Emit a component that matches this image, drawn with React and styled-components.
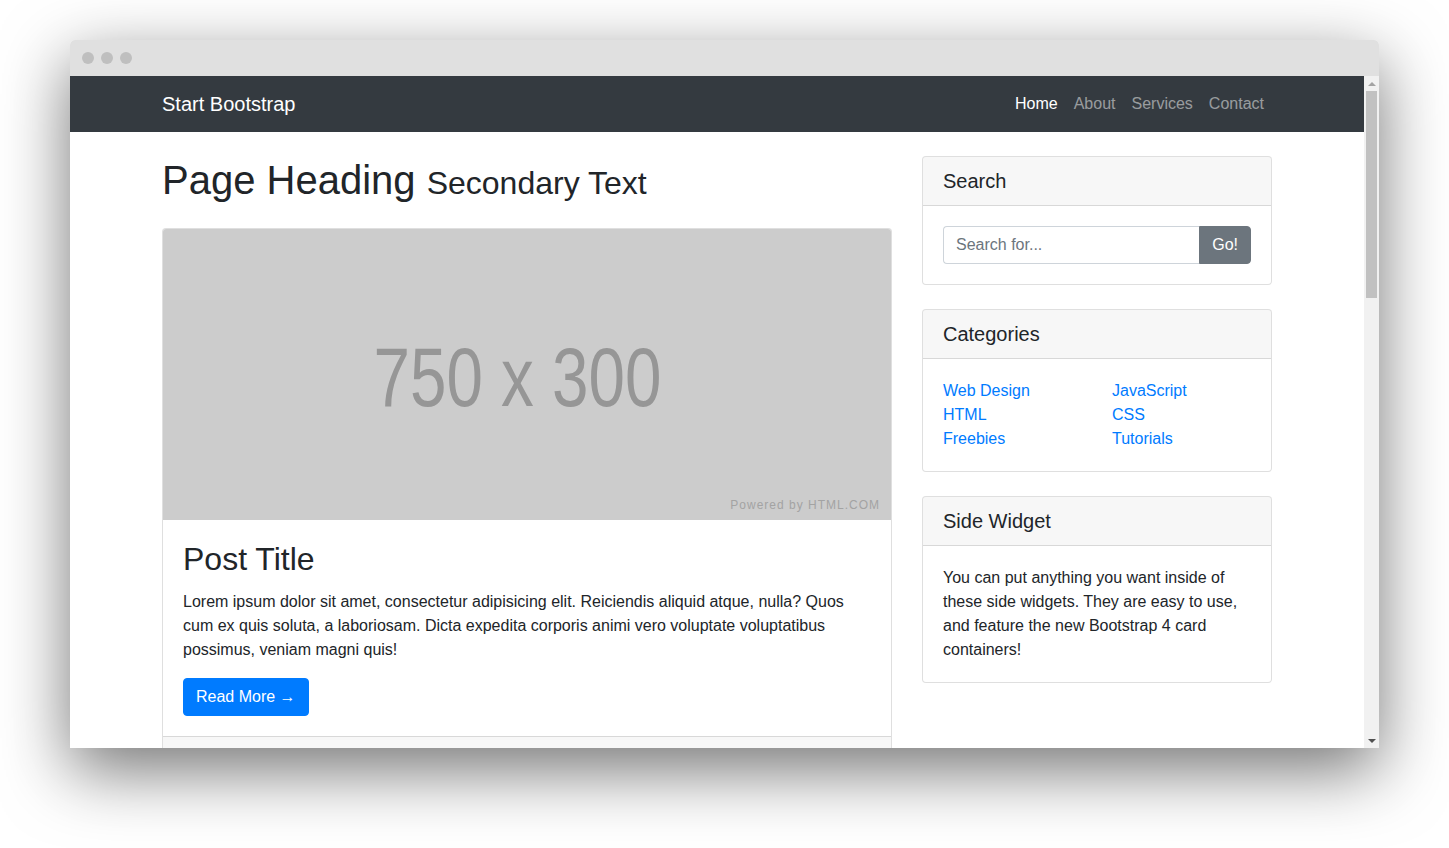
import React from "react";
import styled, {createGlobalStyle} from "styled-components";

const GlobalStyle = createGlobalStyle`
  body {
    margin: 0;
    background: #fff;
    font-family: "Liberation Sans", Arial, sans-serif;
    color: #212529;
  }
  * {
    box-sizing: border-box;
  }
`;

const Stage = styled.div`
  padding: 40px 70px 100px;
`;

const Window = styled.div`
  width: 1309px;
  border-radius: 5px 5px 0 0;
  overflow: hidden;
  box-shadow: 0 22px 68px rgba(0, 0, 0, 0.55);
`;

const TitleBar = styled.div`
  height: 36px;
  background: #e0e0e0;
  display: flex;
  align-items: center;
  gap: 7px;
  padding-left: 12px;
`;

const Dot = styled.span`
  width: 12px;
  height: 12px;
  border-radius: 50%;
  background: #bfbfbf;
`;

const WindowBody = styled.div`
  display: flex;
  height: 672px;
`;

const Page = styled.div`
  width: 1294px;
  overflow: hidden;
  background: #fff;
  font-size: 16px;
  line-height: 1.5;
`;

const Scrollbar = styled.div`
  width: 15px;
  background: #f1f1f1;
  display: flex;
  flex-direction: column;
  align-items: center;
`;

const ScrollArrow = styled.div`
  height: 15px;
  width: 15px;
  display: flex;
  align-items: center;
  justify-content: center;
  &::after {
    content: "";
    border-left: 4px solid transparent;
    border-right: 4px solid transparent;
    ${(p) => (p.$down
      ? "border-top: 4px solid #505050;"
      : "border-bottom: 4px solid #a3a3a3;")}
  }
`;

const ScrollTrack = styled.div`
  flex: 1;
  width: 100%;
  display: flex;
  justify-content: center;
`;

const ScrollThumb = styled.div`
  width: 11px;
  height: 207px;
  background: #c1c1c1;
`;

const Navbar = styled.nav`
  background: #343a40;
  height: 56px;
`;

const Container = styled.div`
  width: 1140px;
  margin: 0 auto;
  padding: 0 15px;
`;

const NavInner = styled(Container)`
  height: 100%;
  display: flex;
  align-items: center;
  justify-content: space-between;
`;

const Brand = styled.a`
  color: #fff;
  font-size: 20px;
  line-height: 30px;
  text-decoration: none;
`;

const NavList = styled.ul`
  display: flex;
  list-style: none;
  margin: 0;
  padding: 0;
`;

const NavLink = styled.a`
  display: block;
  padding: 8px;
  color: ${(p) => (p.$active ? "#fff" : "rgba(255, 255, 255, 0.5)")};
  text-decoration: none;
`;

const Row = styled.div`
  display: grid;
  grid-template-columns: 730px 350px;
  column-gap: 30px;
`;

const Heading = styled.h1`
  margin: 24px 0;
  font-size: 40px;
  font-weight: 500;
  line-height: 1.2;
`;

const Small = styled.small`
  font-size: 80%;
  font-weight: 400;
`;

const Card = styled.div`
  border: 1px solid rgba(0, 0, 0, 0.125);
  border-radius: 4px;
  background: #fff;
  overflow: hidden;
  margin-bottom: 24px;
  &:first-child {
    margin-top: 24px;
  }
`;

const Placeholder = styled.div`
  position: relative;
  height: 291px;
  background: #cccccc;
  display: flex;
  align-items: center;
  justify-content: center;
`;

const PlaceholderText = styled.span`
  font-size: 84px;
  line-height: 1;
  color: #969696;
  transform: scaleX(0.78);
  margin-left: -20px;
  margin-top: 4px;
`;

const PoweredBy = styled.span`
  position: absolute;
  right: 11px;
  bottom: 6px;
  font-size: 12px;
  letter-spacing: 1px;
  color: #a3a3a3;
`;

const CardBody = styled.div`
  padding: 20px;
`;

const PostTitle = styled.h2`
  margin: 0 0 12px;
  font-size: 32px;
  font-weight: 500;
  line-height: 1.2;
`;

const Text = styled.p`
  margin: 0 0 ${(p) => (p.$flush ? "0" : "16px")};
`;

const Button = styled.a`
  display: inline-block;
  padding: 6px 12px;
  font-size: 16px;
  line-height: 24px;
  color: #fff;
  background: ${(p) => (p.$variant === "secondary" ? "#6c757d" : "#007bff")};
  border: 1px solid ${(p) => (p.$variant === "secondary" ? "#6c757d" : "#007bff")};
  border-radius: 4px;
  text-decoration: none;
`;

const CardFooter = styled.div`
  height: 49px;
  background: rgba(0, 0, 0, 0.03);
  border-top: 1px solid rgba(0, 0, 0, 0.125);
`;

const Sidebar = styled.aside`
  display: flex;
  flex-direction: column;
`;

const CardHeader = styled.h5`
  margin: 0;
  padding: 12px 20px;
  font-size: 20px;
  font-weight: 500;
  line-height: 1.2;
  background: rgba(0, 0, 0, 0.03);
  border-bottom: 1px solid rgba(0, 0, 0, 0.125);
`;

const InputGroup = styled.div`
  display: flex;
  ${Button} {
    border-radius: 0 4px 4px 0;
  }
`;

const Input = styled.input`
  flex: 1;
  min-width: 0;
  height: 38px;
  padding: 6px 12px;
  font: inherit;
  font-size: 16px;
  color: #495057;
  border: 1px solid #ced4da;
  border-right: none;
  border-radius: 4px 0 0 4px;
  outline: none;
  &::placeholder {
    color: #6c757d;
  }
`;

const LinkColumns = styled.div`
  display: grid;
  grid-template-columns: 169px 139px;
`;

const LinkList = styled.ul`
  list-style: none;
  margin: 0;
  padding: 0;
`;

const Link = styled.a`
  color: #007bff;
  text-decoration: none;
`;

const navLinks = ["Home", "About", "Services", "Contact"];
const categories = [
  ["Web Design", "HTML", "Freebies"],
  ["JavaScript", "CSS", "Tutorials"],
];

export default function App() {
  return (
    <>
      <GlobalStyle/>
      <Stage>
        <Window>
          <TitleBar>
            <Dot/>
            <Dot/>
            <Dot/>
          </TitleBar>
          <WindowBody>
            <Page>
              <Navbar>
                <NavInner>
                  <Brand href="#">Start Bootstrap</Brand>
                  <NavList>
                    {navLinks.map((link, i) => (
                      <li key={link}>
                        <NavLink href="#" $active={i === 0}>{link}</NavLink>
                      </li>
                    ))}
                  </NavList>
                </NavInner>
              </Navbar>

              <Container>
                <Row>
                  <main>
                    <Heading>
                      Page Heading <Small>Secondary Text</Small>
                    </Heading>
                    <Card>
                      <Placeholder>
                        <PlaceholderText>750 x 300</PlaceholderText>
                        <PoweredBy>Powered by HTML.COM</PoweredBy>
                      </Placeholder>
                      <CardBody>
                        <PostTitle>Post Title</PostTitle>
                        <Text>
                          Lorem ipsum dolor sit amet, consectetur adipisicing elit. Reiciendis aliquid atque, nulla? Quos
                          cum ex quis soluta, a laboriosam. Dicta expedita corporis animi vero voluptate voluptatibus
                          possimus, veniam magni quis!
                        </Text>
                        <Button href="#">Read More &rarr;</Button>
                      </CardBody>
                      <CardFooter/>
                    </Card>
                  </main>

                  <Sidebar>
                    <Card>
                      <CardHeader>Search</CardHeader>
                      <CardBody>
                        <InputGroup>
                          <Input placeholder="Search for..."/>
                          <Button as="button" $variant="secondary">Go!</Button>
                        </InputGroup>
                      </CardBody>
                    </Card>

                    <Card>
                      <CardHeader>Categories</CardHeader>
                      <CardBody>
                        <LinkColumns>
                          {categories.map((col, i) => (
                            <LinkList key={i}>
                              {col.map((c) => (
                                <li key={c}><Link href="#">{c}</Link></li>
                              ))}
                            </LinkList>
                          ))}
                        </LinkColumns>
                      </CardBody>
                    </Card>

                    <Card>
                      <CardHeader>Side Widget</CardHeader>
                      <CardBody>
                        <Text $flush>
                          You can put anything you want inside of these side widgets. They are easy to use, and
                          feature the new Bootstrap 4 card containers!
                        </Text>
                      </CardBody>
                    </Card>
                  </Sidebar>
                </Row>
              </Container>
            </Page>
            <Scrollbar>
              <ScrollArrow/>
              <ScrollTrack>
                <ScrollThumb/>
              </ScrollTrack>
              <ScrollArrow $down/>
            </Scrollbar>
          </WindowBody>
        </Window>
      </Stage>
    </>
  );
}
